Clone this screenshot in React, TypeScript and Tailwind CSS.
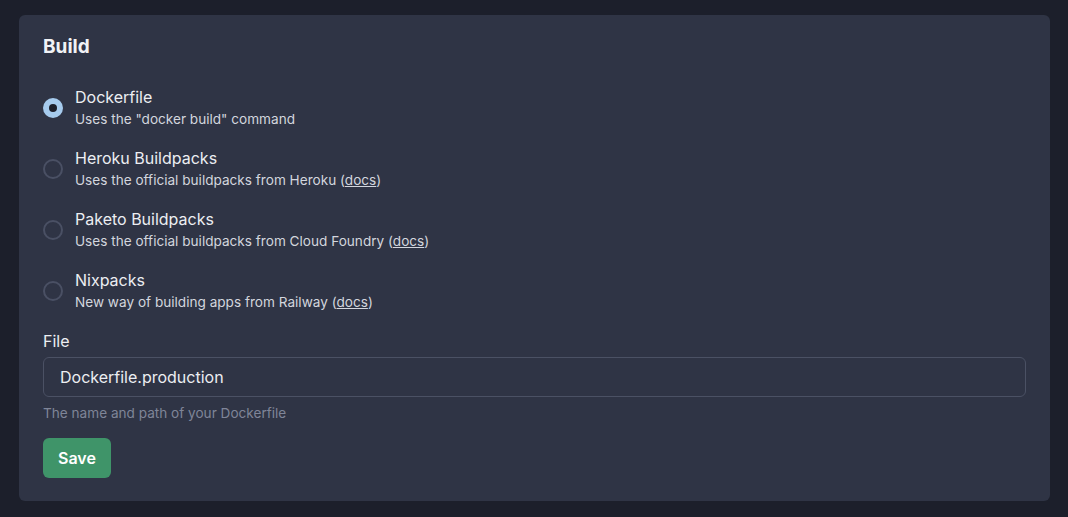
const options = [
  { title: 'Dockerfile', desc: 'Uses the "docker build" command', docs: false },
  { title: 'Heroku Buildpacks', desc: 'Uses the official buildpacks from Heroku', docs: true },
  { title: 'Paketo Buildpacks', desc: 'Uses the official buildpacks from Cloud Foundry', docs: true },
  { title: 'Nixpacks', desc: 'New way of building apps from Railway', docs: true },
];

export default function App() {
  const selected = 0;
  return (
    <div
      className="min-h-[517px] w-full bg-[#1c1f2b] pl-[19px] pr-[18px] pt-[15px] pb-[16px]"
      style={{ fontFamily: 'Inter, "Noto Sans", sans-serif' }}
    >
      <div className="rounded-[6px] bg-[#2f3445] px-6 pt-[17px] pb-[23px]">
        <h2 className="text-[19px] font-bold leading-[29px] text-[#f1f2f5]">Build</h2>
        <div className="mt-[24px] flex flex-col gap-4">
          {options.map((o, i) => (
            <label key={o.title} className="flex items-center gap-3">
              {i === selected ? (
                <span className="flex h-5 w-5 items-center justify-center rounded-full bg-[#a6cbee]">
                  <span className="h-2 w-2 rounded-full bg-[#1c1f2b]" />
                </span>
              ) : (
                <span className="h-5 w-5 rounded-full border-2 border-[#4a5064]" />
              )}
              <span className="flex flex-col">
                <span className="text-[16px] leading-[24px] text-[#eceef2]">{o.title}</span>
                <span className="text-[13.6px] leading-[21px] text-[#d3d6de]">
                  {o.desc}
                  {o.docs && (
                    <>
                      {' ('}
                      <span className="underline">docs</span>
                      {')'}
                    </>
                  )}
                </span>
              </span>
            </label>
          ))}
        </div>
        <div className="mt-4 text-[16px] leading-[24px] text-[#eceef2]">File</div>
        <input
          className="mt-1 h-10 w-full rounded-[6px] border border-[#4b5164] bg-[#2f3445] px-4 text-[16px] text-[#eceef2] outline-none"
          defaultValue="Dockerfile.production"
        />
        <p className="mt-[6px] text-[13.6px] leading-[20px] text-[#7f8598]">The name and path of your Dockerfile</p>
        <button className="mt-[15px] h-10 rounded-[6px] bg-[#3f9469] px-[15px] text-[16px] font-semibold text-white">
          Save
        </button>
      </div>
    </div>
  );
}
